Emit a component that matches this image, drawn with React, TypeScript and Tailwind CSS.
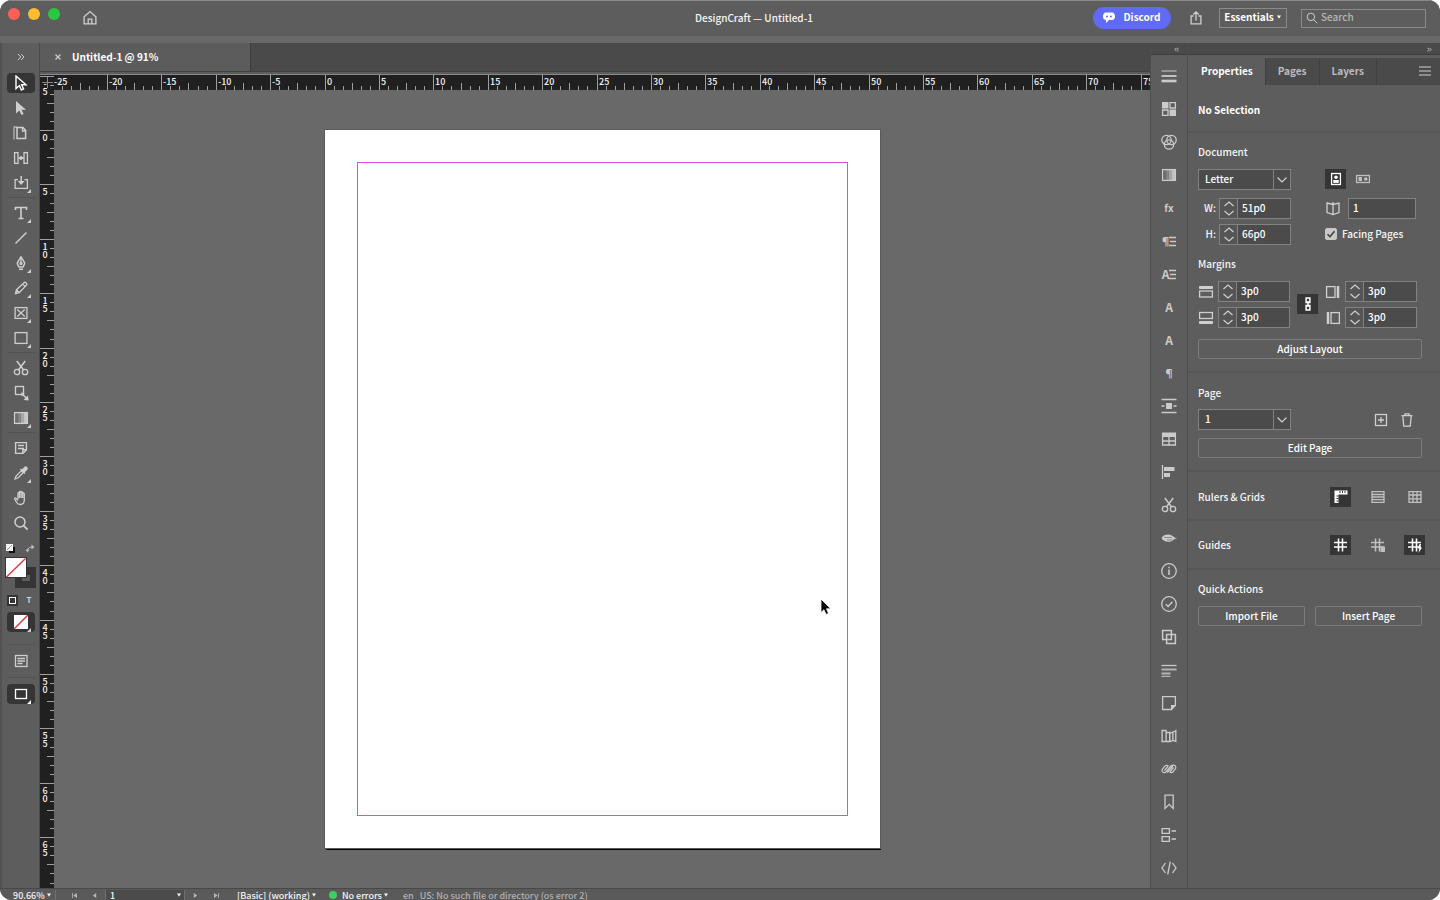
import { useLayoutEffect, useRef, useState } from "react";
import type { ReactNode } from "react";

// 1 pica at the current zoom level
const PICA = 10.88;
const PAGE_W = 555;
const PAGE_H = 718;

function Icon({ children, className = "size-4" }: { children: ReactNode; className?: string }) {
    return (
        <svg viewBox="0 0 16 16" className={`${className} shrink-0`} fill="none" stroke="currentColor" strokeWidth="1.3" aria-hidden="true">
            {children}
        </svg>
    );
}

function Caret() {
    return (
        <svg viewBox="0 0 6 4" className="h-1 w-1.5 shrink-0" aria-hidden="true">
            <path d="M1 .5h4L3 3.7z" fill="currentColor" />
        </svg>
    );
}

function Corner() {
    return (
        <svg viewBox="0 0 4 4" className="absolute right-1 bottom-0 size-1" aria-hidden="true">
            <path d="M4 0v4H0z" fill="currentColor" />
        </svg>
    );
}

const scissors = (
    <>
        <circle cx="4" cy="12" r="2.7" />
        <circle cx="12" cy="12" r="2.7" />
        <path d="M3.8 1l6.8 9M12.2 1l-6.8 9" strokeWidth="1.5" />
    </>
);

const gradientRect = (
    <>
        <rect x="1.6" y="2.6" width="12.8" height="10.8" />
        <path d="M4 3v10" strokeWidth="2" opacity="0.15" />
        <path d="M6.5 3v10" strokeWidth="2.5" opacity="0.4" />
        <path d="M9.5 3v10" strokeWidth="3" opacity="0.65" />
        <path d="M12.5 3v10" strokeWidth="3" opacity="0.9" />
    </>
);

const arrow = "M3 1v12.6l3.4-3L8.4 15l2.2-1-2-4.2H13z";

type Tool = { name: string; icon: ReactNode; more?: boolean };

const toolGroups: Tool[][] = [
    [
        { name: "Selection", icon: <path d={arrow} strokeWidth="1.4" /> },
        { name: "Direct Selection", icon: <path d={arrow} fill="currentColor" strokeWidth="0" /> },
        {
            name: "Page",
            icon: (
                <>
                    <path d="M1 1.5v13M4 2H1" strokeWidth="1" />
                    <path d="M4 2.6h6l2.6 2.8v8H4z" strokeWidth="1.5" />
                    <path d="M9.5 2.6V6h3" />
                </>
            ),
        },
        {
            name: "Gap",
            icon: (
                <>
                    <rect x="1.6" y="2.6" width="3.4" height="10.8" />
                    <rect x="11" y="2.6" width="3.4" height="10.8" />
                    <path d="M5.5 8h5" />
                    <path d="M5.5 8L8 5.8v4.4zM10.5 8L8 5.8v4.4z" fill="currentColor" strokeWidth="0" />
                </>
            ),
        },
        {
            name: "Content Collector",
            more: true,
            icon: (
                <>
                    <path d="M5 4.6H2.1v8.8h12.3V4.6h-3" />
                    <path d="M8.2 1v7" strokeWidth="1.5" />
                    <path d="M4.8 6h6.8l-3.4 4z" fill="currentColor" strokeWidth="0" />
                </>
            ),
        },
    ],
    [
        { name: "Type", more: true, icon: <path d="M2.5 5V2.5h11V5M8 2.5v11M5.5 13.5h5" strokeWidth="1.6" /> },
        { name: "Line", icon: <path d="M2.5 13.5l11-11" strokeWidth="1.5" /> },
        {
            name: "Pen",
            more: true,
            icon: (
                <>
                    <path d="M8 1.5C7.5 4 4.5 6 4.3 8.5L6 12h4l1.7-3.5C11.5 6 8.5 4 8 1.5zM6 14.3h4" strokeWidth="1.5" />
                    <path d="M8 2.5v5" />
                    <circle cx="8" cy="8.5" r="1" />
                </>
            ),
        },
        {
            name: "Pencil",
            more: true,
            icon: <path d="M2.5 13.5l1-3.8 7.8-7.2c1-.8 3.3 1.3 2.4 2.4l-7.5 7.7zM3.5 9.7l2.7 2.9M9.7 4l2.6 2.6" />,
        },
        {
            name: "Rectangle Frame",
            more: true,
            icon: (
                <>
                    <rect x="2.1" y="2.6" width="11.8" height="10.8" />
                    <path d="M4.3 4.5l7.4 7M11.7 4.5l-7.4 7" />
                </>
            ),
        },
        { name: "Rectangle", more: true, icon: <rect x="2.1" y="2.6" width="11.8" height="10.8" /> },
    ],
    [
        { name: "Scissors", icon: scissors },
        {
            name: "Free Transform",
            icon: (
                <>
                    <rect x="2.5" y="1.5" width="8" height="8" />
                    <path d="M9 9l5 4.5" strokeWidth="1.5" />
                    <path d="M15.8 15.5l-1-5-4.2 4.4zM8 7.5l.8 4 3-3.2z" fill="currentColor" strokeWidth="0" />
                </>
            ),
        },
        { name: "Gradient Swatch", more: true, icon: gradientRect },
    ],
    [
        { name: "Note", icon: <path d="M2.6 2.6h10.8V10L10 13.4H2.6zM5 5.5h6M5 8.5h6M13 9.8H9.8V13" strokeWidth="1.4" /> },
        {
            name: "Eyedropper",
            more: true,
            icon: (
                <>
                    <path d="M2 14l1.2-3.2 5-5 2 2-5 5z" />
                    <path d="M7.5 4L12 8.5M9 5.5l2.8-3c1.2-1.2 3 .6 2 1.800l-3 3z" fill="currentColor" strokeWidth="1.5" />
                </>
            ),
        },
        {
            name: "Hand",
            icon: (
                <path d="M5 9V3.5c0-1 1.5-1 1.5 0V2.2c0-1 1.6-1 1.6 0v.5c0-1 1.6-1 1.6 0V4c0-1 1.6-1 1.6 0v6c0 3-1.5 4.5-4 4.5-2 0-3-.8-3.8-2.3L1.700 9c-.4-1 .8-1.4 1.400-.7L5 10.5M6.5 3.5V8M8.1 2.5V8M9.7 3.5V8" />
            ),
        },
        {
            name: "Zoom",
            icon: (
                <>
                    <circle cx="7" cy="7" r="5" strokeWidth="1.5" />
                    <path d="M10.6 10.6l4 4" strokeWidth="1.8" />
                </>
            ),
        },
    ],
];

// Paragraph and character style icons share the little list beside the glyph
const styleLines = (
    <svg viewBox="0 0 7 12" className="h-3 w-[7px]" stroke="currentColor" strokeWidth="1.3" aria-hidden="true">
        <path d="M0 2.5h7M1 6.5h6M0 10.5h7" />
    </svg>
);

const dockItems: { name: string; icon: ReactNode }[] = [
    {
        name: "Stroke",
        icon: (
            <Icon>
                <path d="M.5 3h15" strokeWidth="1" />
                <path d="M.5 8h15" strokeWidth="2" opacity="0.9" />
                <path d="M.5 13h15" strokeWidth="2.6" />
            </Icon>
        ),
    },
    {
        name: "Swatches",
        icon: (
            <Icon>
                <path d="M1 1h6.5v6.5H1zM8.5 8.5H15V15H8.5z" fill="currentColor" strokeWidth="0" />
                <path d="M9 1.6h5.4V7H9zM1.6 9H7v5.4H1.6z" />
            </Icon>
        ),
    },
    {
        name: "Color",
        icon: (
            <Icon>
                <circle cx="5.5" cy="6" r="4.7" />
                <circle cx="10.5" cy="6" r="4.7" />
                <circle cx="8" cy="10.5" r="4.7" />
            </Icon>
        ),
    },
    { name: "Gradient", icon: <Icon>{gradientRect}</Icon> },
    { name: "Effects", icon: <span className="font-bold">fx</span> },
    {
        name: "Paragraph Styles",
        icon: (
            <span className="flex items-center font-['Noto_Sans'] text-[11px] font-bold">
                ¶{styleLines}
            </span>
        ),
    },
    {
        name: "Character Styles",
        icon: (
            <span className="flex items-center text-xs font-bold">
                A{styleLines}
            </span>
        ),
    },
    { name: "Character", icon: <span className="text-xs font-bold">A</span> },
    { name: "Glyphs", icon: <span className="text-xs font-bold">A</span> },
    { name: "Paragraph", icon: <span className="font-['Noto_Sans'] text-[11px] font-bold">¶</span> },
    {
        name: "Text Wrap",
        icon: (
            <Icon>
                <path d="M.5 1.5h15M.5 14.5h15M.5 8h3M12.5 8h3" />
                <rect x="5" y="5" width="6" height="6" fill="currentColor" strokeWidth="0" />
            </Icon>
        ),
    },
    {
        name: "Table",
        icon: (
            <Icon>
                <path d="M1 1.5h14V6H1z" fill="currentColor" strokeWidth="0" />
                <path d="M1.6 2v12h12.8V2M1.6 10h12.8M8 6v8" />
            </Icon>
        ),
    },
    {
        name: "Align",
        icon: (
            <Icon>
                <path d="M1.5 1v14" />
                <path d="M3 3h10.5v4H3zM3 9h6v4H3z" fill="currentColor" strokeWidth="0" />
            </Icon>
        ),
    },
    { name: "Snippets", icon: <Icon>{scissors}</Icon> },
    {
        name: "Preview",
        icon: (
            <Icon>
                <path d="M.5 8C2 5.5 4 4.5 7 4.500S12 6 13.5 7.5l2.5 1-2.5.5C12 11 10 11.8 7 11.8S2 10.5.5 8z" fill="currentColor" strokeWidth="0" />
                <path d="M3 7.5h8M6 10h6" stroke="#5d5d5d" strokeWidth="0.6" />
            </Icon>
        ),
    },
    {
        name: "Info",
        icon: (
            <Icon>
                <circle cx="8" cy="8" r="7.3" />
                <path d="M8 6.5V12M8 3.8v1.5" strokeWidth="1.5" />
            </Icon>
        ),
    },
    {
        name: "Preflight",
        icon: (
            <Icon>
                <circle cx="8" cy="8" r="7.3" />
                <path d="M4.8 8.2l2.3 2.3 4.3-4.8" strokeWidth="1.5" />
            </Icon>
        ),
    },
    {
        name: "Pathfinder",
        icon: (
            <Icon>
                <path d="M1.6 1.6h8.8v8.8H1.6zM5.6 5.6h8.8v8.8H5.6z" strokeWidth="1.5" />
            </Icon>
        ),
    },
    {
        name: "Story",
        icon: (
            <Icon>
                <path d="M.5 3.5h15" />
                <path d="M.5 7.5h15M.5 11.5h9" strokeWidth="2" opacity="0.8" />
                <path d="M.5 14.3h9" strokeWidth="1" />
            </Icon>
        ),
    },
    {
        name: "Notes",
        icon: (
            <Icon>
                <path d="M1.6 1.6h12.8v8.9l-4 4H1.6z" />
                <path d="M14.5 10H10v4.5z" fill="currentColor" strokeWidth="0" />
            </Icon>
        ),
    },
    {
        name: "Books",
        icon: (
            <Icon>
                <path d="M1.1 2.5h4v11h-4zM5.1 4.5h3.6v9H5.1zM8.9 5.2l3-1v8.300l-3 1zM11.9 4.200l2.900-1.600v10.800l-2.900-1" />
            </Icon>
        ),
    },
    {
        name: "Hyperlinks",
        icon: (
            <Icon>
                <path
                    d="M7.500 5.200C6.500 4 5 4 3.800 5.200L1.500 8c-1.200 2 .5 4.300 3 3.500L9.800 5c1-1 3.700-1.500 4.700.2.500 1 .4 2-.3 2.900l-2 2.500c-1 1.300-2.600 1.400-3.700.2M3.500 9.500L7 5.300M12.500 6.500L9 10.800M6.300 11.500L11.800 5"
                    strokeWidth="1.2"
                />
            </Icon>
        ),
    },
    { name: "Bookmarks", icon: <Icon><path d="M4 1.100h8.200v13.300l-4.100-4-4.100 4z" /></Icon> },
    { name: "Data Merge", icon: <Icon><path d="M1.100 1.600h7.300v4.800H1.100zM1.100 9.600h7.300v4.800H1.100zM10.500 4H15M10.500 12H15" /></Icon> },
    { name: "Tags", icon: <Icon><path d="M4.500 3L1 8l3.500 5M11.500 3L15 8l-3.500 5M9.300 1.500l-2.600 13" /></Icon> },
];

function ToolButton({ tool, active, onClick }: { tool: Tool; active: boolean; onClick: () => void }) {
    return (
        <div className="flex h-[25px] items-center">
            <button
                aria-label={tool.name}
                onClick={onClick}
                className={`relative flex h-5 w-7 items-center justify-center rounded-sm ${active ? "bg-[#353535] text-white" : ""}`}
            >
                <Icon>{tool.icon}</Icon>
                {tool.more && <Corner />}
            </button>
        </div>
    );
}

function Toolbar() {
    const [tool, setTool] = useState("Selection");

    return (
        <aside className="flex w-10 shrink-0 flex-col overflow-hidden border-r border-l-2 border-[#525252] border-r-[#4a4a4a] pl-[5px] text-[#cfcfcf]">
            <button aria-label="Expand toolbar" className="flex h-[27px] w-7 shrink-0 items-center justify-center">
                <svg viewBox="0 0 8 8" className="size-2" fill="none" stroke="currentColor" aria-hidden="true">
                    <path d="M1 1l2.8 3L1 7M4.2 1L7 4 4.2 7" />
                </svg>
            </button>
            {toolGroups.map((group, i) => (
                <div key={i}>
                    {i > 0 && <div className="my-0.5 h-px w-7 bg-[#525252]" />}
                    {group.map((t) => (
                        <ToolButton key={t.name} tool={t} active={tool === t.name} onClick={() => setTool(t.name)} />
                    ))}
                </div>
            ))}

            {/* Fill and stroke */}
            <button aria-label="Fill and stroke" className="mt-[5px] -ml-0.5 h-14 w-8 shrink-0">
                <svg viewBox="0 0 32 56" className="h-14 w-8" fill="none" aria-hidden="true">
                    <rect x="5" y="8" width="4" height="4" stroke="#111" strokeWidth="2" />
                    <rect x="1" y="4" width="7" height="7" fill="#f5f5f5" />
                    <path d="M2 10l5-5" stroke="#e08080" />
                    <path d="M22.5 11c0-3 2-4 5-4" stroke="#bdbdbd" />
                    <path d="M20.5 9.500h4l-2 3zM26.500 4.500v5l3-2.500z" fill="#bdbdbd" />
                    <rect x="10" y="27" width="21" height="21" fill="#353535" />
                    <rect x="17" y="35" width="8" height="6" fill="#5d5d5d" />
                    <rect x="0.5" y="17.5" width="21" height="20" fill="#fff" stroke="#353535" />
                    <path d="M1.5 37L20.500 18.500" stroke="#d93b3b" strokeWidth="1.5" />
                </svg>
            </button>
            <div className="-mt-1 flex h-4 w-7 shrink-0 items-center justify-between">
                <button aria-label="Formatting affects container" className="flex size-[11px] items-center justify-center bg-[#353535]">
                    <span className="size-[7px] border border-white" />
                </button>
                <button aria-label="Formatting affects text" className="w-3 text-[8px] leading-3 font-bold">T</button>
            </div>
            <button aria-label="Apply none" className="relative mt-1 flex h-5 w-7 shrink-0 items-center justify-center rounded-sm bg-[#353535]">
                <svg viewBox="0 0 14 14" className="size-3.5" aria-hidden="true">
                    <path d="M0 0h14v14H0z" fill="#fff" />
                    <path d="M0 14L14 0" stroke="#d93b3b" strokeWidth="1.5" />
                </svg>
                <Corner />
            </button>
            <div className="mt-3 h-px w-7 shrink-0 bg-[#525252]" />
            <button aria-label="View options" className="flex h-8 w-7 shrink-0 items-center justify-center">
                <Icon>
                    <rect x="2.5" y="2.5" width="11.5" height="11" />
                    <path d="M4.500 5.500H12M4.500 8H12M4.500 10.500h5" />
                </Icon>
            </button>
            <div className="h-px w-7 shrink-0 bg-[#525252]" />
            <button aria-label="Screen mode" className="relative mt-1.5 flex h-5 w-7 shrink-0 items-center justify-center rounded-sm bg-[#353535] text-white">
                <Icon>
                    <rect x="2.5" y="3.5" width="11" height="9" />
                </Icon>
                <Corner />
            </button>
        </aside>
    );
}

// Length of a ruler in pixels, along its own axis
function useLength(side: "width" | "height") {
    const ref = useRef<HTMLDivElement>(null);
    const [length, setLength] = useState(0);

    useLayoutEffect(() => {
        const el = ref.current;
        if (!el) return;
        const measure = () => setLength(Math.round(el.getBoundingClientRect()[side]));
        measure();
        const observer = new ResizeObserver(measure);
        observer.observe(el);
        return () => observer.disconnect();
    }, [side]);

    return { ref, length };
}

// Six ticks for every five picas, the first of each six carries the number
function getTicks(zero: number, length: number) {
    const step = (PICA * 5) / 6;
    const first = Math.ceil((-zero - 3) / step);
    const last = Math.floor((length - zero) / step);
    return Array.from({ length: Math.max(0, last - first + 1) }, (_, i) => {
        const n = first + i;
        return { n, pos: Math.round(zero + n * step), major: n % 6 === 0, mid: n % 3 === 0 };
    });
}

function HorizontalRuler() {
    const { ref, length } = useLength("width");
    const ticks = getTicks(length / 2 - PAGE_W / 2, length);

    return (
        <div ref={ref} className="h-4 overflow-hidden border-t border-[#8a8a8a] bg-[#202020]">
            <svg className="h-[15px] w-full" aria-hidden="true">
                {ticks.map(({ n, pos, major, mid }) => (
                    <g key={n}>
                        <path d={`M${pos + 0.5} 15v-${major ? 15 : mid ? 7 : 4}`} stroke="#a0a0a0" />
                        {major && (
                            <text x={pos + 2} y="10" fontSize="9" fill="#f5f5f5">
                                {(n / 6) * 5}
                            </text>
                        )}
                    </g>
                ))}
            </svg>
        </div>
    );
}

function VerticalRuler() {
    const { ref, length } = useLength("height");
    // the canvas starts 16px lower than this ruler
    const ticks = getTicks(16 + (length - 16) / 2 - PAGE_H / 2, length);

    return (
        <div ref={ref} className="relative w-3.5 shrink-0 overflow-hidden border-t border-[#8a8a8a] bg-[#202020]">
            <svg className="h-full w-3.5" aria-hidden="true">
                {ticks.map(({ n, pos, major, mid }) => (
                    <g key={n}>
                        <path d={`M14 ${pos - 0.5}h-${major ? 14 : mid ? 7 : 4}`} stroke="#a0a0a0" />
                        {major &&
                            String((n / 6) * 5).split("").map((char, i) => (
                                <text key={i} x="5" y={pos + 10 + i * 8} textAnchor="middle" fontSize="9" fill="#f5f5f5">
                                    {char}
                                </text>
                            ))}
                    </g>
                ))}
            </svg>
            <svg viewBox="0 0 14 14" className="absolute top-0 left-0 size-3.5" stroke="#8a8a8a" aria-hidden="true">
                <path d="M7.5 2v11M2 7.500h11" />
            </svg>
        </div>
    );
}

function Workspace() {
    return (
        <main className="flex min-w-0 flex-1 flex-col">
            <div className="flex h-7 shrink-0 items-stretch bg-[#4a4a4a]">
                <div className="flex w-[211px] items-center gap-2.5 border-r border-[#3e3e3e] bg-[#5c5c5c] pl-3.5">
                    <button aria-label="Close tab" className="text-[#cfcfcf]">
                        <svg viewBox="0 0 8 8" className="size-2" stroke="currentColor" strokeWidth="1.2" aria-hidden="true">
                            <path d="M1.5 1.5l5 5M6.5 1.5l-5 5" />
                        </svg>
                    </button>
                    <span className="font-bold text-white">Untitled-1 @ 91%</span>
                </div>
            </div>
            <div className="h-[3px] shrink-0 border-t border-[#404040] bg-[#5c5c5c]" />
            <div className="flex min-h-0 flex-1">
                <VerticalRuler />
                <div className="flex min-w-0 flex-1 flex-col">
                    <HorizontalRuler />
                    <div className="relative flex min-h-0 flex-1 items-center justify-center overflow-hidden bg-[#696969]">
                        <div className="ml-px flex h-[718px] w-[555px] shrink-0 bg-white p-8 shadow-[0_0_0_1px_#5a5a5a,1px_2px_0_#000]">
                            <div className="flex-1 border border-[#d94fd6]" />
                        </div>
                        <svg viewBox="0 0 12 18" className="absolute top-[508px] left-[766px] h-[18px] w-3" aria-hidden="true">
                            <path d="M1 1v13.5l3-2.8 2 4.7 2.5-1-2-4.6h4.2z" fill="#000" stroke="#fff" strokeWidth="0.8" />
                        </svg>
                    </div>
                </div>
            </div>
        </main>
    );
}

function CollapseButton({ left }: { left?: boolean }) {
    return (
        <button aria-label={left ? "Expand panels" : "Collapse panels"} className="text-[#cfcfcf]">
            <svg viewBox="0 0 6 6" className="size-[5px]" fill="none" stroke="currentColor" aria-hidden="true">
                {left ? <path d="M3 1L1 3l2 2M5.5 1l-2 2 2 2" /> : <path d="M.5 1l2 2-2 2M3 1l2 2-2 2" />}
            </svg>
        </button>
    );
}

function Dock() {
    return (
        <aside className="flex w-[38px] shrink-0 flex-col overflow-hidden border-x border-[#4d4d4d] bg-[#5d5d5d] text-[#cbcbcb]">
            <div className="flex h-3 shrink-0 items-center justify-end border-b border-[#3e3e3e] bg-[#4a4a4a] pt-0.5 pr-2">
                <CollapseButton left />
            </div>
            <div className="flex flex-col pt-1">
                {dockItems.map((item) => (
                    <button key={item.name} aria-label={item.name} className="flex h-[33px] shrink-0 items-center justify-center">
                        {item.icon}
                    </button>
                ))}
            </div>
        </aside>
    );
}

function PanelSelect({ label, options }: { label: string; options: string[] }) {
    return (
        <div className="relative h-[21px] w-[93px]">
            <select aria-label={label} className="block h-full w-full appearance-none border border-[#828282] bg-[#4b4b4b] pb-0.5 pl-1.5 text-white outline-none">
                {options.map((o) => (
                    <option key={o}>{o}</option>
                ))}
            </select>
            <span className="pointer-events-none absolute inset-y-0 right-0 flex w-[18px] items-center justify-center border border-[#828282] text-[#d0d0d0]">
                <svg viewBox="0 0 10 6" className="h-1.5 w-2.5" fill="none" stroke="currentColor" strokeWidth="1.2" aria-hidden="true">
                    <path d="M.5.5L5 5 9.5.5" />
                </svg>
            </span>
        </div>
    );
}

function Stepper({ id, label, value }: { id: string; label?: string; value: string }) {
    return (
        <div className="flex h-[21px] w-[72px] border border-[#828282] bg-[#4b4b4b]">
            <div className="flex w-[18px] flex-col border-r border-[#828282] bg-[#555] text-[#cfcfcf]">
                <button aria-label="Increase" className="flex flex-1 items-center justify-center">
                    <svg viewBox="0 0 10 6" className="h-1.5 w-2.5" fill="none" stroke="currentColor" strokeWidth="1.2" aria-hidden="true">
                        <path d="M.5 5L5 1l4.500 4" />
                    </svg>
                </button>
                <button aria-label="Decrease" className="flex flex-1 items-center justify-center">
                    <svg viewBox="0 0 10 6" className="h-1.5 w-2.5" fill="none" stroke="currentColor" strokeWidth="1.2" aria-hidden="true">
                        <path d="M.5 1L5 5l4.500-4" />
                    </svg>
                </button>
            </div>
            <input id={id} aria-label={label} defaultValue={value} className="w-0 flex-1 bg-transparent pb-0.5 pl-1 text-white outline-none" />
        </div>
    );
}

function OutlineButton({ children, className = "" }: { children: ReactNode; className?: string }) {
    return <button className={`flex h-5 items-center justify-center rounded-xs border border-[#7c7c7c] text-white ${className}`}>{children}</button>;
}

function IconToggle({ label, on, children }: { label: string; on?: boolean; children: ReactNode }) {
    const [pressed, setPressed] = useState(!!on);
    return (
        <button
            aria-label={label}
            aria-pressed={pressed}
            onClick={() => setPressed(!pressed)}
            className={`flex h-5 w-[21px] items-center justify-center ${pressed ? "bg-[#353535] text-white" : "text-[#c0c0c0]"}`}
        >
            {children}
        </button>
    );
}

const Divider = () => <div className="h-0.5 shrink-0 bg-[#575757]" />;

const hash = <path d="M5.5 1.5v13M9.5 1.5v13M1 5.5h13M1 10h13" strokeWidth="1.5" />;

function Properties() {
    const [facing, setFacing] = useState(true);
    const [tab, setTab] = useState("Properties");

    return (
        <aside className="flex w-[252px] shrink-0 flex-col overflow-hidden bg-[#5d5d5d] text-[#f5f5f5]">
            <div className="flex h-3 shrink-0 items-center justify-end border-b border-[#3e3e3e] bg-[#4a4a4a] pt-0.5 pr-2">
                <CollapseButton />
            </div>
            <div className="mt-[3px] flex h-[27px] shrink-0 bg-[#4a4a4a]">
                {["Properties", "Pages", "Layers"].map((t) => (
                    <button
                        key={t}
                        onClick={() => setTab(t)}
                        className={`border-r border-[#404040] px-3 pb-0.5 font-bold first:pl-[13px] ${tab === t ? "bg-[#5d5d5d] text-white" : "text-[#bdbdbd]"}`}
                    >
                        {t}
                    </button>
                ))}
                <button aria-label="Panel menu" className="mr-[9px] ml-auto pb-0.5 text-[#cfcfcf]">
                    <svg viewBox="0 0 12 10" className="h-2.5 w-3" stroke="currentColor" strokeWidth="1.2" aria-hidden="true">
                        <path d="M0 1h12M0 5h12M0 9h12" />
                    </svg>
                </button>
            </div>

            <h2 className="flex h-[46px] shrink-0 items-center px-2.5 pt-1 font-bold text-white">No Selection</h2>
            <Divider />

            <section className="px-2.5 pt-[11px] pb-3">
                <h3 className="mb-[9px] h-4">Document</h3>
                <div className="flex items-start">
                    <PanelSelect label="Page size" options={["Letter", "Legal", "Tabloid"]} />
                    <div className="ml-[34px] flex gap-1.5">
                        <IconToggle label="Portrait" on>
                            <Icon>
                                <rect x="3.6" y="2.5" width="8.8" height="11" />
                                <circle cx="8" cy="6.300" r="1.8" fill="currentColor" strokeWidth="0" />
                                <rect x="5.3" y="9" width="5.4" height="3" fill="currentColor" strokeWidth="0" />
                            </Icon>
                        </IconToggle>
                        <IconToggle label="Landscape">
                            <Icon>
                                <rect x="1.6" y="4.500" width="12.8" height="7" />
                                <rect x="3.5" y="6" width="3.5" height="4" fill="currentColor" strokeWidth="0" />
                                <circle cx="10.8" cy="8" r="1.8" fill="currentColor" strokeWidth="0" />
                            </Icon>
                        </IconToggle>
                    </div>
                </div>
                <div className="mt-2 flex h-[21px] items-center">
                    <label htmlFor="doc-w" className="mr-[3px] w-[18px] pb-0.5 text-right">W:</label>
                    <Stepper id="doc-w" value="51p0" />
                    <label htmlFor="doc-pages" className="ml-[34px] flex w-[23px] pb-0.5 text-[#cfcfcf]" aria-label="Number of pages">
                        <Icon>
                            <path d="M2 3l6 1.500L14 3v9.500l-6 2-6-2zM8 2v13" />
                        </Icon>
                    </label>
                    <input id="doc-pages" defaultValue="1" className="h-[21px] w-[68px] border border-[#828282] bg-[#4b4b4b] pb-0.5 pl-1 text-white outline-none" />
                </div>
                <div className="mt-[5px] flex h-[21px] items-center">
                    <label htmlFor="doc-h" className="mr-[3px] w-[18px] pb-0.5 text-right">H:</label>
                    <Stepper id="doc-h" value="66p0" />
                    <label className="relative ml-[34px] flex items-center gap-[5px] pb-0.5">
                        <input
                            type="checkbox"
                            checked={facing}
                            onChange={(e) => setFacing(e.target.checked)}
                            className="size-3 appearance-none rounded-xs border border-[#c8c8c8] checked:bg-[#c8c8c8]"
                        />
                        {facing && (
                            <svg viewBox="0 0 12 12" className="pointer-events-none absolute left-0 size-3" fill="none" stroke="#3a3a3a" strokeWidth="1.5" aria-hidden="true">
                                <path d="M2.5 6.2L5 8.700l4.500-5.500" />
                            </svg>
                        )}
                        Facing Pages
                    </label>
                </div>

                <h3 className="mt-[11px] mb-[9px] h-4">Margins</h3>
                <div className="flex items-center">
                    <div className="flex flex-col gap-[5px] text-[#cfcfcf]">
                        <div className="flex items-center gap-1">
                            <Icon>
                                <path d="M1.5 2.5h13v2h-13z" fill="currentColor" strokeWidth="1" />
                                <rect x="1.6" y="7" width="12.8" height="6" />
                            </Icon>
                            <Stepper id="m-top" label="Top margin" value="3p0" />
                        </div>
                        <div className="flex items-center gap-1">
                            <Icon>
                                <rect x="1.6" y="2.5" width="12.8" height="6" />
                                <path d="M1.5 11.5h13v2h-13z" fill="currentColor" strokeWidth="1" />
                            </Icon>
                            <Stepper id="m-bottom" label="Bottom margin" value="3p0" />
                        </div>
                    </div>
                    <div className="mx-[7px] pb-0.5">
                        <IconToggle label="Link margins" on>
                            <Icon>
                                <path d="M6.1 2.1h3.8v4.500H6.100zM6.100 9.400h3.800v4.500H6.100zM8 5v6" strokeWidth="1.5" />
                            </Icon>
                        </IconToggle>
                    </div>
                    <div className="flex flex-col gap-[5px] text-[#cfcfcf]">
                        <div className="flex items-center gap-1">
                            <Icon>
                                <rect x="1.6" y="2.6" width="8.4" height="10.8" />
                                <path d="M13 2v12" strokeWidth="2.5" />
                            </Icon>
                            <Stepper id="m-inside" label="Inside margin" value="3p0" />
                        </div>
                        <div className="flex items-center gap-1">
                            <Icon>
                                <path d="M3 2v12" strokeWidth="2.5" />
                                <rect x="6" y="2.6" width="8.4" height="10.8" />
                            </Icon>
                            <Stepper id="m-outside" label="Outside margin" value="3p0" />
                        </div>
                    </div>
                </div>
                <OutlineButton className="mt-[11px] w-56">Adjust Layout</OutlineButton>
            </section>
            <Divider />

            <section className="px-2.5 pt-3 pb-3">
                <h3 className="mb-2 h-4">Page</h3>
                <div className="flex items-center">
                    <PanelSelect label="Current page" options={["1", "2"]} />
                    <div className="ml-auto flex gap-2.5 pr-[15px] text-[#cfcfcf]">
                        <button aria-label="Add page">
                            <Icon>
                                <rect x="2.5" y="2.5" width="11" height="11" />
                                <path d="M8 5v6M5 8h6" />
                            </Icon>
                        </button>
                        <button aria-label="Delete page">
                            <Icon>
                                <path d="M2.5 3.600h11M6 3.500V1.800h4v1.700M3.800 4l1 10.200h6.400l1-10.200" />
                            </Icon>
                        </button>
                    </div>
                </div>
                <OutlineButton className="mt-2 w-56">Edit Page</OutlineButton>
            </section>
            <Divider />

            <section className="flex h-[47px] shrink-0 items-center justify-between pt-0.5 pr-[15px] pl-2.5">
                <h3>Rulers &amp; Grids</h3>
                <div className="flex gap-4">
                    <IconToggle label="Rulers" on>
                        <Icon>
                            <path d="M1.5 1.500h13v4h-9v8.500h-4z" fill="currentColor" strokeWidth="0" />
                            <path d="M7 2v2M9.500 2v2M12 2v2M3.500 7h2M3.500 9.500h2M3.500 12h2" stroke="#353535" strokeWidth="1" />
                        </Icon>
                    </IconToggle>
                    <IconToggle label="Baseline grid">
                        <Icon>
                            <path d="M2 2.600h12v10.800H2zM2 5.500h12M2 8h12M2 10.700h12" />
                        </Icon>
                    </IconToggle>
                    <IconToggle label="Document grid">
                        <Icon>
                            <path d="M2 2.600h12v10.800H2zM2 6h12M2 9.800h12M6 2.600v10.800M10 2.600v10.800" />
                        </Icon>
                    </IconToggle>
                </div>
            </section>
            <Divider />
            <section className="flex h-[47px] shrink-0 items-center justify-between pr-[15px] pl-2.5">
                <h3>Guides</h3>
                <div className="flex gap-4">
                    <IconToggle label="Show guides" on>
                        <Icon>{hash}</Icon>
                    </IconToggle>
                    <IconToggle label="Lock guides">
                        <Icon>
                            {hash}
                            <path d="M10.500 9.500H15V15h-4.500z" fill="currentColor" strokeWidth="0" />
                        </Icon>
                    </IconToggle>
                    <IconToggle label="Smart guides" on>
                        <Icon>
                            {hash}
                            <path d="M12.500 7l-2 4.500h1.800L11.500 16l3.500-5.500h-1.800L14 7z" fill="currentColor" strokeWidth="0" />
                        </Icon>
                    </IconToggle>
                </div>
            </section>
            <Divider />

            <section className="px-2.5 pt-[11px]">
                <h3 className="mb-[9px] h-4">Quick Actions</h3>
                <div className="flex w-56 gap-2.5">
                    <OutlineButton className="flex-1">Import File</OutlineButton>
                    <OutlineButton className="flex-1">Insert Page</OutlineButton>
                </div>
            </section>
        </aside>
    );
}

function TitleBar() {
    return (
        <header className="flex h-[43px] shrink-0 items-start border-t border-b-[7px] border-t-[#8a8a8a] border-b-[#686868] bg-[#5d5d5d] text-white">
            <div className="flex w-[415px] shrink pl-2">
                <div className="flex gap-2 pt-[7px]">
                    <button aria-label="Close" className="size-3 rounded-full bg-[#ff5f57]" />
                    <button aria-label="Minimize" className="size-3 rounded-full bg-[#febc2e]" />
                    <button aria-label="Zoom window" className="size-3 rounded-full bg-[#28c840]" />
                </div>
                <button aria-label="Home" className="mt-[9px] ml-[22px] h-4 text-[#cfcfcf]">
                    <Icon>
                        <path d="M2.100 6.800L8 1.600l5.900 5.200v7.100H2.100zM6.200 13.900V9.200h3.600v4.700" />
                    </Icon>
                </button>
            </div>
            <h1 className="flex h-[34px] flex-1 items-center justify-center text-[#f5f5f5]">DesignCraft — Untitled-1</h1>
            <div className="flex h-[34px] shrink-0 items-center pr-3.5">
                <a href="#discord" className="flex h-[22px] w-[78px] items-center justify-center gap-2 rounded-full bg-[#5f6bf4] pb-0.5 font-bold">
                    <svg viewBox="0 0 12 11" className="h-[11px] w-3" aria-hidden="true">
                        <path d="M3 .5h6c2 0 3 2 3 4S11 8 9 8H6l-3 3V8C1 8 0 6.500 0 4.500S1 .5 3 .5z" fill="#fff" />
                        <circle cx="4" cy="4.500" r="1" fill="#5f6bf4" />
                        <circle cx="8" cy="4.500" r="1" fill="#5f6bf4" />
                    </svg>
                    Discord
                </a>
                <button aria-label="Share" className="ml-[17px] text-[#cfcfcf]">
                    <Icon>
                        <path d="M5.500 6H3.100v7.900h9.800V6h-2.400M8 10.500V2M5.300 4.500L8 1.800l2.700 2.700" />
                    </Icon>
                </button>
                <button className="ml-[15px] flex h-5 w-[68px] items-center justify-center gap-0.5 border border-[#8a8a8a] pb-0.5 font-bold">
                    Essentials
                    <Caret />
                </button>
                <label className="ml-3.5 flex h-[19px] w-[125px] items-center border border-[#8a8a8a] pl-1 text-[#cfcfcf]">
                    <Icon className="size-3">
                        <circle cx="6.5" cy="6.5" r="5" />
                        <path d="M10 10l5 5" />
                    </Icon>
                    <input aria-label="Search" placeholder="Search" className="w-0 flex-1 bg-transparent pb-0.5 pl-[3px] text-white outline-none placeholder:text-[#b5b5b5]" />
                </label>
            </div>
        </header>
    );
}

function StatusBar() {
    return (
        <footer className="flex h-3 shrink-0 items-center border-t border-[#484848] bg-[#5a5a5a] pt-px text-[9px] leading-[11px] text-[#f5f5f5]">
            <button className="ml-[13px] flex w-[43px] items-center gap-px border-r border-[#707070]">
                90.66%
                <Caret />
            </button>
            <div className="flex w-[49px] items-center justify-around pl-2 text-[#b5b5b5]">
                <button aria-label="First page">
                    <svg viewBox="0 0 6 6" className="size-[5px]" aria-hidden="true"><path d="M0 0h1v6H0zM6 0v6L1.500 3z" fill="currentColor" /></svg>
                </button>
                <button aria-label="Previous page">
                    <svg viewBox="0 0 6 6" className="size-[5px]" aria-hidden="true"><path d="M5 0v6L1 3z" fill="currentColor" /></svg>
                </button>
            </div>
            <button className="flex w-20 items-center justify-between border-x border-[#707070] bg-[#4b4b4b] pr-0.5 pl-1">
                1
                <Caret />
            </button>
            <div className="flex w-[34px] items-center justify-between pl-2 text-[#b5b5b5]">
                <button aria-label="Next page">
                    <svg viewBox="0 0 6 6" className="size-[5px]" aria-hidden="true"><path d="M1 0v6l4-3z" fill="currentColor" /></svg>
                </button>
                <button aria-label="Last page">
                    <svg viewBox="0 0 6 6" className="size-[5px]" aria-hidden="true"><path d="M5 0h1v6H5zM0 0v6l4.500-3z" fill="currentColor" /></svg>
                </button>
            </div>
            <button className="ml-[18px] flex items-center gap-px">
                [Basic] (working)
                <Caret />
            </button>
            <button className="ml-3 flex items-center gap-px">
                <span className="mr-1 size-2 rounded-full bg-[#3ecf5c]" />
                No errors
                <Caret />
            </button>
            <span className="ml-3.5 text-[#b0b0b0]">en</span>
            <span className="ml-1.5 text-[#b0b0b0]">US: No such file or directory (os error 2)</span>
        </footer>
    );
}

export default function App() {
    return (
        <div className="flex h-screen flex-col overflow-hidden rounded-xl bg-[#5d5d5d] font-['Noto_Sans_CJK_SC','Noto_Sans',sans-serif] text-[10px] leading-4 font-medium">
            <TitleBar />
            <div className="flex min-h-0 flex-1">
                <Toolbar />
                <Workspace />
                <Dock />
                <Properties />
            </div>
            <StatusBar />
        </div>
    );
}
